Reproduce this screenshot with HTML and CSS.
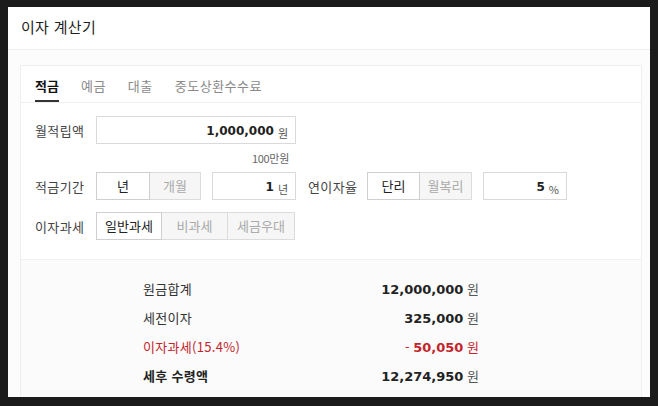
FILE: index.html
```html
<!DOCTYPE html>
<html lang="ko">
<head>
<meta charset="utf-8">
<link rel="stylesheet" href="styles.css">
</head>
<body>
<div class="panel">
  <div class="header">이자 계산기</div>
  <div class="body">
    <div class="card">
      <div class="tabs">
        <div class="tab active">적금</div>
        <div class="tab">예금</div>
        <div class="tab">대출</div>
        <div class="tab">중도상환수수료</div>
      </div>
      <div class="form">
        <div class="row">
          <div class="label">월적립액</div>
          <div class="input wide"><span class="num">1,000,000</span><span class="unit">원</span></div>
        </div>
        <div class="hint">100만원</div>
        <div class="row">
          <div class="label">적금기간</div>
          <div class="seg">
            <div class="btn on b54">년</div>
            <div class="btn b51">개월</div>
          </div>
          <div class="input short"><span class="num">1</span><span class="unit">년</span></div>
          <div class="label label2">연이자율</div>
          <div class="seg">
            <div class="btn on b53">단리</div>
            <div class="btn b52">월복리</div>
          </div>
          <div class="input short"><span class="num">5</span><span class="unit">%</span></div>
        </div>
        <div class="row row3">
          <div class="label">이자과세</div>
          <div class="seg">
            <div class="btn on b66">일반과세</div>
            <div class="btn b66">비과세</div>
            <div class="btn b67">세금우대</div>
          </div>
        </div>
      </div>
      <div class="result">
        <div class="res-row">
          <div class="res-label">원금합계</div>
          <div class="res-val"><b>12,000,000</b> <span class="won">원</span></div>
        </div>
        <div class="res-row">
          <div class="res-label">세전이자</div>
          <div class="res-val"><b>325,000</b> <span class="won">원</span></div>
        </div>
        <div class="res-row red">
          <div class="res-label">이자과세(15.4%)</div>
          <div class="res-val"><span class="minus">-</span> <b>50,050</b> <span class="won">원</span></div>
        </div>
        <div class="res-row total">
          <div class="res-label">세후 수령액</div>
          <div class="res-val"><b>12,274,950</b> <span class="won">원</span></div>
        </div>
      </div>
    </div>
  </div>
</div>
</body>
</html>
```
FILE: styles.css
```css
* { box-sizing: border-box; }
html, body { margin: 0; padding: 0; }
body {
  background: #1b1b1b;
  padding: 7px 8px 9px 8px;
  font-family: "Noto Sans CJK KR", "Noto Sans", sans-serif;
  color: #333;
  font-size: 13px;
}
.panel {
  background: #fcfcfc;
  width: 642px;
  height: 390px;
  overflow: hidden;
}
.header {
  height: 43px;
  background: #fff;
  border-bottom: 1px solid #efefef;
  padding-left: 13px;
  font-size: 15px;
  line-height: 40px;
  color: #1e1e1e;
  letter-spacing: 0.3px;
}
.body {
  padding: 15px 8px 0 12px;
}
.card {
  background: #fff;
  border: 1px solid #efefef;
  border-bottom: none;
  height: 340px;
}
.tabs {
  display: flex;
  gap: 22px;
  height: 37px;
  padding-left: 14px;
  border-bottom: 1px solid #efefef;
}
.tab {
  padding-top: 11px;
  line-height: 17px;
  font-size: 13px;
  color: #8a8a8a;
  height: 36px;
  letter-spacing: 0.5px;
}
.tab.active {
  color: #111;
  font-weight: bold;
  border-bottom: 2px solid #333;
  letter-spacing: 0;
}
.form {
  padding: 13px 0 19px 14px;
}
.row {
  display: flex;
  align-items: center;
  height: 28px;
}
.row3 { margin-top: 12px; }
.label {
  width: 61px;
  color: #444;
  font-size: 13px;
  letter-spacing: 0.4px;
}
.label2 { width: 59px; margin-left: 12px; }
.input {
  height: 28px;
  border: 1px solid #d9d9d9;
  background: #fff;
  display: flex;
  align-items: center;
  justify-content: flex-end;
  padding-right: 7px;
  padding-top: 2px;
}
.input.wide { width: 200px; }
.input.short { width: 84px; margin-left: 11px; }
.num {
  font-family: "DejaVu Sans", sans-serif;
  font-weight: bold;
  font-size: 12px;
  color: #222;
}
.unit {
  font-size: 11px;
  color: #555;
  margin-left: 4px;
  padding-top: 3px;
}
.hint {
  height: 28px;
  width: 254px;
  text-align: right;
  font-size: 11px;
  color: #666;
  line-height: 28px;
  letter-spacing: -0.3px;
}
.seg { display: flex; }
.btn {
  height: 28px;
  line-height: 26px;
  text-align: center;
  border: 1px solid #dcdcdc;
  background: #f6f6f6;
  color: #aaa;
  font-size: 13px;
}
.btn + .btn { border-left: none; }
.btn.on {
  background: #fff;
  color: #222;
  border-color: #cfcfcf;
}
.b54 { width: 54px; }
.b51 { width: 51px; }
.b53 { width: 53px; }
.b52 { width: 52px; }
.b66 { width: 66px; }
.b67 { width: 67px; }
.result {
  background: #fbfbfb;
  border-top: 1px solid #f0f0f0;
  padding: 14px 0 0 122px;
  height: 160px;
}
.res-row {
  display: flex;
  justify-content: space-between;
  width: 336px;
  height: 29px;
  line-height: 29px;
  color: #333;
}
.res-label { letter-spacing: 0.3px; }
.res-val b {
  font-family: "DejaVu Sans", sans-serif;
  font-weight: bold;
  font-size: 13px;
  color: #222;
}
.won { color: #555; font-size: 13px; }
.red .res-label, .red .minus, .red .won { color: #c3252d; }
.red .res-val b { color: #c3252d; }
.total .res-label { font-weight: bold; color: #222; }
```
